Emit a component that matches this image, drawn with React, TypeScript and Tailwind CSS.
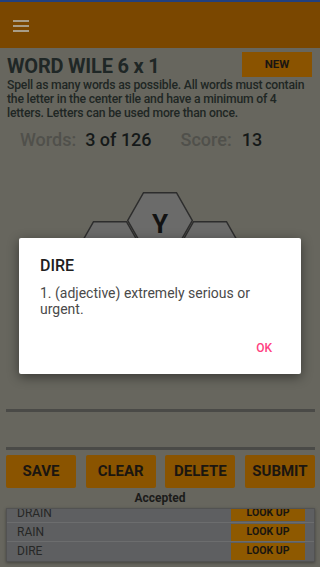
import React from "react";

const HEX_POINTS = "16.5,0.75 49.5,0.75 65.25,28.5 49.5,56.25 16.5,56.25 0.75,28.5";

function Hex({ letter, left, top }: { letter?: string; left: number; top: number }) {
  return (
    <div className="absolute w-[66px] h-[57px]" style={{ left, top }}>
      <svg width="66" height="57" viewBox="0 0 66 57" className="absolute inset-0">
        <polygon points={HEX_POINTS} fill="#6b6b6a" stroke="#2d2d2d" strokeWidth="1.5" />
      </svg>
      {letter ? (
        <div className="absolute inset-0 flex items-center justify-center pt-[7px] text-[26px] font-bold text-[#121212]">
          {letter}
        </div>
      ) : null}
    </div>
  );
}

const hexes = [
  { key: "t", letter: "Y", left: 50, top: 0 },
  { key: "ul", left: 0, top: 28.5 },
  { key: "ur", left: 100, top: 28.5 },
  { key: "c", left: 50, top: 57 },
  { key: "ll", left: 0, top: 85.5 },
  { key: "lr", left: 100, top: 85.5 },
  { key: "b", left: 50, top: 114 },
];

const words = ["DRAIN", "RAIN", "DIRE"];

export default function App() {
  return (
    <div className="relative w-[320px] h-[567px] overflow-hidden bg-[#67665e] font-['Roboto',sans-serif]">
      <div className="h-[2px] bg-[#22407f]" />
      <div className="h-[46px] bg-[#7a4700] flex items-center pl-[13px]">
        <div className="flex flex-col gap-[3px] mt-[1px]">
          <div className="w-[16px] h-[2px] bg-[#a89d88]" />
          <div className="w-[16px] h-[2px] bg-[#a89d88]" />
          <div className="w-[16px] h-[2px] bg-[#a89d88]" />
        </div>
      </div>

      <div className="flex items-start justify-between pl-[7px] pr-[8px] mt-[4px] h-[25px]">
        <div className="text-[20px] leading-[24px] font-bold text-[#1f2726] mt-[2px] whitespace-nowrap tracking-[-0.2px]">
          WORD WILE 6 x 1
        </div>
        <div className="w-[70px] h-[25px] bg-[#8a5300] flex items-center justify-center text-[11.5px] font-bold text-[#1a1612]">
          NEW
        </div>
      </div>

      <div className="mt-[1px] px-[7px] text-[12.2px] leading-[14px] font-medium text-[#202624] tracking-[-0.2px] whitespace-nowrap">
        <div>Spell as many words as possible. All words must contain</div>
        <div>the letter in the center tile and have a minimum of 4</div>
        <div>letters. Letters can be used more than once.</div>
      </div>

      <div className="mt-[9px] flex items-center pl-[20px] text-[18px] leading-[22px] font-medium whitespace-nowrap">
        <span className="text-[#50504b]">Words:</span>
        <span className="ml-[9px] text-[#151919]">3 of 126</span>
        <span className="ml-[29px] text-[#50504b]">Score:</span>
        <span className="ml-[10px] text-[#151919]">13</span>
      </div>

      <div className="relative mx-auto mt-[41px] w-[166px] h-[171px]">
        {hexes.map((h) => (
          <Hex key={h.key} letter={h.letter} left={h.left} top={h.top} />
        ))}
      </div>

      <div className="mt-[46px] ml-[6px] mr-[5px] h-[3px] bg-[#4a4a47]" />
      <div className="ml-[6px] mr-[5px] h-[35px]" />
      <div className="ml-[6px] mr-[5px] h-[3px] bg-[#4a4a47]" />

      <div className="mt-[5px] ml-[6px] mr-[5px] flex gap-[9.5px]">
        {["SAVE", "CLEAR", "DELETE", "SUBMIT"].map((b) => (
          <div
            key={b}
            className="flex-1 h-[33px] rounded-[2px] bg-[#8a5400] flex items-center justify-center text-[15px] font-bold text-[#1b1610]"
          >
            {b}
          </div>
        ))}
      </div>

      <div className="mt-[3px] text-center text-[12px] leading-[14px] font-bold text-[#1b1b1a]">Accepted</div>

      <div className="mt-[3px] ml-[6px] mr-[5px] h-[54px] overflow-hidden border border-[#525252] bg-[#5e5f61] shadow-[0_1px_3px_rgba(0,0,0,0.35)]">
        <div className="-mt-[6px]">
          {words.map((w, i) => (
            <div
              key={w}
              className={`flex items-center justify-between h-[19px] pl-[10px] pr-[9px] ${
                i > 0 ? "border-t border-[#6c6d6e]" : ""
              }`}
            >
              <span className="text-[12px] text-[#262726]">{w}</span>
              <div className="w-[74px] h-[17px] bg-[#8e5900] flex items-center justify-center text-[10.5px] font-bold text-[#1a1610]">
                LOOK UP
              </div>
            </div>
          ))}
        </div>
      </div>

      <div className="absolute left-[19px] top-[238px] w-[282px] h-[136px] bg-white rounded-[2px] shadow-[0_3px_12px_rgba(0,0,0,0.45)] pt-[18px] pl-[21px] pr-[21px] flex flex-col">
        <div className="text-[16px] leading-[19px] font-medium text-[#202020]">DIRE</div>
        <div className="mt-[10px] text-[14px] leading-[16px] text-[#4a4a4a]">
          1. (adjective) extremely serious or urgent.
        </div>
        <div className="mt-[24px] flex justify-end pr-[8px]">
          <span className="text-[12px] leading-[14px] font-medium text-[#ff4081]">OK</span>
        </div>
      </div>
    </div>
  );
}
